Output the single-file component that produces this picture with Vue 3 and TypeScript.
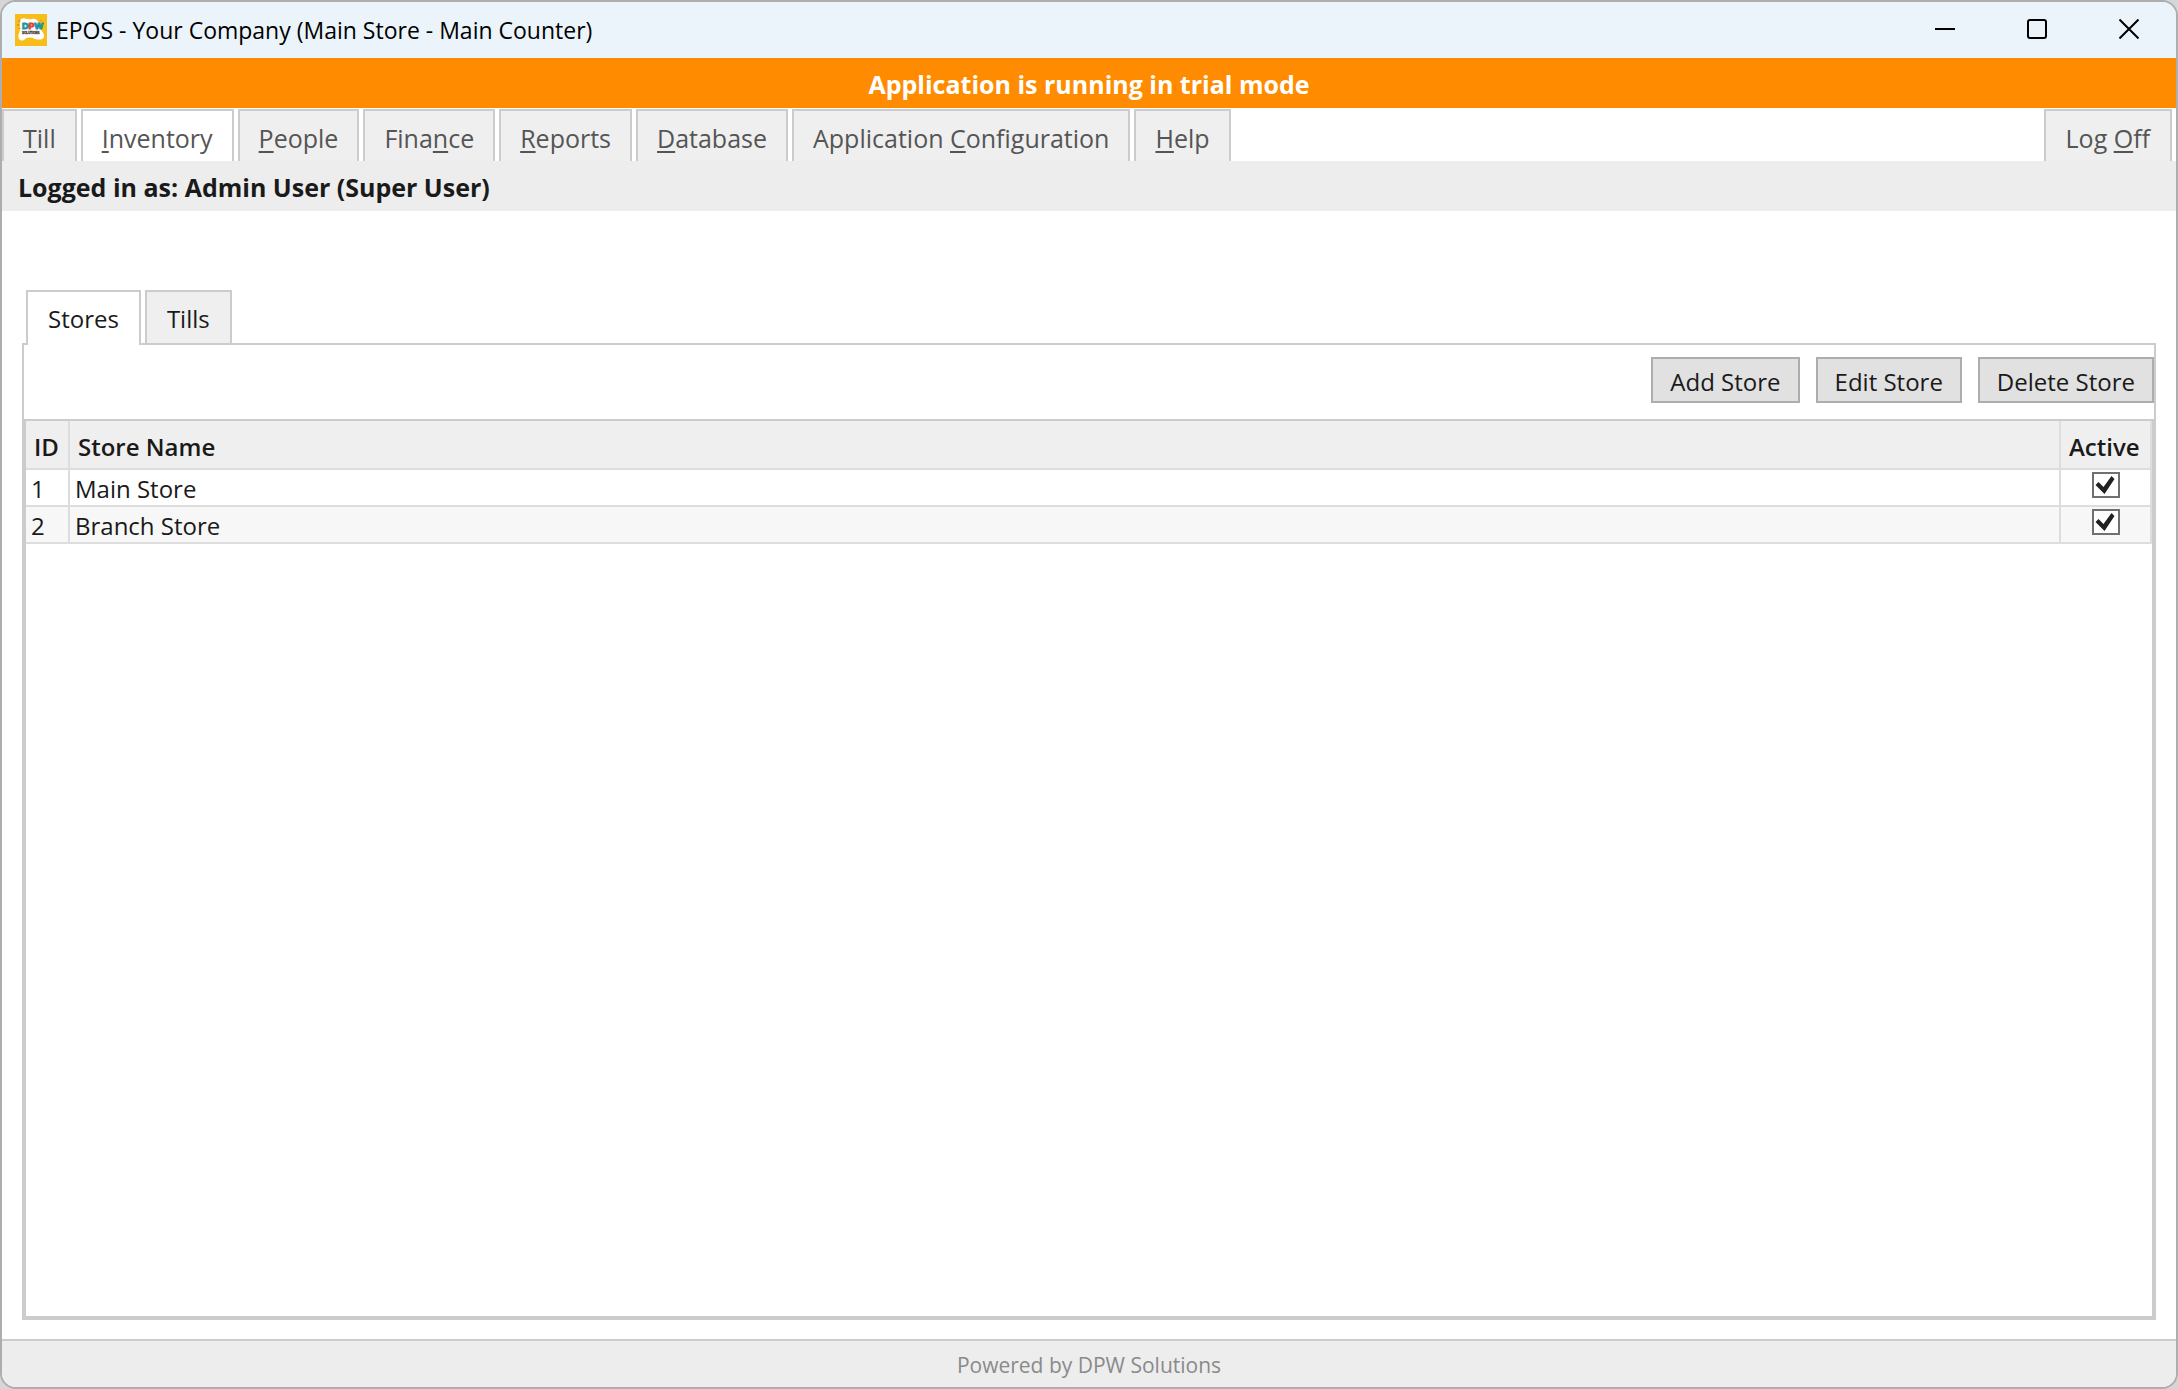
<script setup lang="ts">
import { reactive, ref } from 'vue'

interface MenuItem {
  before: string
  key: string
  after: string
}

interface Store {
  id: number
  name: string
  active: boolean
}

const menu: MenuItem[] = [
  { before: '', key: 'T', after: 'ill' },
  { before: '', key: 'I', after: 'nventory' },
  { before: '', key: 'P', after: 'eople' },
  { before: 'Fina', key: 'n', after: 'ce' },
  { before: '', key: 'R', after: 'eports' },
  { before: '', key: 'D', after: 'atabase' },
  { before: 'Application ', key: 'C', after: 'onfiguration' },
  { before: '', key: 'H', after: 'elp' },
]
const currentMenu = ref(1)

const tabs = ['Stores', 'Tills']
const currentTab = ref('Stores')

const actions = ['Add Store', 'Edit Store', 'Delete Store']

const stores = reactive<Store[]>([
  { id: 1, name: 'Main Store', active: true },
  { id: 2, name: 'Branch Store', active: true },
])
</script>

<template>
  <div class="window">
    <header class="titlebar">
      <svg class="logo" viewBox="0 0 32 32" aria-hidden="true">
        <rect width="32" height="32" fill="#f8bd1a" />
        <path d="M6 5C9 3 12 6 17 5C22 4 24 8 25 13C26 18 30 19 29 23C28 26 24 26 20 25C15 23 12 23 9 26C5 28 2 24 4 19C6 15 4 9 6 5Z" fill="#fff" />
        <path d="M4 6v2M3 10v2M5 14v1M26 6v1M28 9v1M27 12v1" stroke="#a58434" stroke-width="1" />
        <text x="7" y="15" class="logo-name"><tspan class="teal">D</tspan><tspan class="red">P</tspan><tspan class="teal">W</tspan></text>
        <text x="7" y="20" class="logo-sub">SOLUTIONS</text>
      </svg>
      <h1 class="title">EPOS - Your Company (Main Store - Main Counter)</h1>
      <div class="controls">
        <button type="button" aria-label="Minimize">
          <svg viewBox="0 0 20 20"><path d="M0 10H20" /></svg>
        </button>
        <button type="button" aria-label="Maximize">
          <svg viewBox="0 0 20 20"><rect x="1" y="1" width="18" height="18" rx="2" /></svg>
        </button>
        <button type="button" aria-label="Close">
          <svg viewBox="0 0 20 20"><path d="M0.5 0.5L19.5 19.5M19.5 0.5L0.5 19.5" /></svg>
        </button>
      </div>
    </header>

    <div class="trial">Application is running in trial mode</div>

    <nav class="menu">
      <button
        v-for="(item, i) in menu"
        :key="i"
        type="button"
        class="menu-item"
        :class="{ current: i === currentMenu }"
        @click="currentMenu = i"
      >{{ item.before }}<u>{{ item.key }}</u>{{ item.after }}</button>
      <button type="button" class="menu-item logoff">Log <u>O</u>ff</button>
    </nav>

    <div class="status">Logged in as: Admin User (Super User)</div>

    <main class="content">
      <div class="tabs" role="tablist">
        <button
          v-for="tab in tabs"
          :key="tab"
          type="button"
          role="tab"
          class="tab"
          :class="{ current: tab === currentTab }"
          :aria-selected="tab === currentTab"
          @click="currentTab = tab"
        >{{ tab }}</button>
      </div>
      <section class="panel">
        <div class="toolbar">
          <button v-for="action in actions" :key="action" type="button" class="action">{{ action }}</button>
        </div>
        <div class="grid">
          <table>
            <thead>
              <tr>
                <th class="col-id">ID</th>
                <th>Store Name</th>
                <th class="col-active">Active</th>
              </tr>
            </thead>
            <tbody>
              <tr v-for="store in stores" :key="store.id">
                <td>{{ store.id }}</td>
                <td>{{ store.name }}</td>
                <td class="check">
                  <input v-model="store.active" type="checkbox" :aria-label="`${store.name} active`" />
                </td>
              </tr>
            </tbody>
          </table>
        </div>
      </section>
    </main>

    <footer class="footer">Powered by DPW Solutions</footer>
  </div>
</template>

<style>
body {
  background: #d6d6d6;
}
</style>

<style scoped>
.window {
  box-sizing: border-box;
  min-height: 100vh;
  display: flex;
  flex-direction: column;
  border: 2px solid #adadad;
  border-radius: 16px;
  overflow: hidden;
  background: #fff;
  color: #1a1a1a;
  font-family: "Open Sans", "Noto Sans", sans-serif;
  font-size: 25px;
  line-height: 34px;
}

button {
  box-sizing: border-box;
  margin: 0;
  font: inherit;
  color: inherit;
  white-space: nowrap;
}

.titlebar {
  display: flex;
  align-items: center;
  height: 56px;
  padding: 0 1px 0 13px;
  box-sizing: border-box;
  background: #ebf4fa;
}

.logo {
  width: 32px;
  height: 32px;
  flex: none;
}

.logo-name {
  font: 700 9px "Liberation Sans Narrow", "Liberation Sans", sans-serif;
  stroke-width: 1;
}

.teal {
  fill: #1f95ab;
  stroke: #1f95ab;
}

.red {
  fill: #dc4936;
  stroke: #dc4936;
}

.logo-sub {
  font: 700 3px "Liberation Sans Narrow", "Liberation Sans", sans-serif;
  fill: #4a3b32;
  stroke: #4a3b32;
  stroke-width: 0.3;
}

.title {
  flex: 1;
  margin: 0 0 0 9px;
  color: #000;
  font-size: 23px;
  font-weight: 400;
}

.controls {
  display: flex;
  align-self: stretch;
}

.controls button {
  display: flex;
  align-items: center;
  justify-content: center;
  width: 92px;
  padding: 0 0 2px;
  border: 0;
  background: none;
}

.controls svg {
  width: 20px;
  height: 20px;
  fill: none;
  stroke: #000;
  stroke-width: 2;
}

.trial {
  height: 50px;
  line-height: 52px;
  background: #ff8c00;
  color: #fff;
  font-weight: 700;
  text-align: center;
}

.menu {
  display: flex;
  gap: 4px;
  height: 53px;
  padding: 1px 4px 0 0;
  box-sizing: border-box;
}

.menu-item {
  padding: 3px 19px 0;
  border: 2px solid #ccc;
  border-bottom: 0;
  background: #efefef;
  color: #555;
}

.menu-item.current {
  background: #fff;
}

.menu-item u {
  text-decoration-thickness: 2px;
  text-underline-offset: 3px;
}

.logoff {
  margin-left: auto;
  padding: 3px 20px 0;
}

.status {
  height: 50px;
  padding-left: 16px;
  background: #ededed;
  font-weight: 700;
  line-height: 52px;
}

.content {
  flex: 1;
  display: flex;
  flex-direction: column;
  padding: 79px 20px 19px;
  font-size: 24px;
}

.tabs {
  display: flex;
  align-items: flex-start;
  gap: 4px;
  padding-left: 4px;
}

.tab {
  height: 53px;
  padding: 2px 20px 0;
  border: 2px solid #ccc;
  border-bottom: 0;
  background: #efefef;
}

.tab.current {
  height: 55px;
  margin-bottom: -2px;
  padding-bottom: 2px;
  background: #fff;
  z-index: 1;
}

.panel {
  flex: 1;
  display: flex;
  flex-direction: column;
  border: 2px solid #ccc;
}

.toolbar {
  display: flex;
  justify-content: flex-end;
  gap: 16px;
  padding: 12px 0 16px;
}

.action {
  height: 46px;
  padding: 4px 17px 0;
  border: 2px solid #adadad;
  background: #e1e1e1;
}

.grid {
  flex: 1;
  border: 2px solid #ccc;
}

table {
  width: 100%;
  border-collapse: separate;
  border-spacing: 0;
  table-layout: fixed;
}

th,
td {
  box-sizing: border-box;
  border-right: 2px solid #ddd;
  border-bottom: 2px solid #ddd;
  text-align: left;
  white-space: nowrap;
}

th {
  height: 49px;
  padding: 5px 0 0 8px;
  background: #efefef;
  font-weight: 600;
}

td {
  height: 37px;
  padding: 3px 0 0 5px;
  line-height: 32px;
}

tbody tr:nth-child(even) td {
  background: #f7f7f7;
}

.col-id {
  width: 44px;
}

.col-active {
  width: 91px;
}

.check {
  padding: 2px 0 0;
  text-align: center;
  vertical-align: top;
}

.check input {
  appearance: none;
  display: block;
  box-sizing: border-box;
  width: 28px;
  height: 26px;
  margin: 0 auto;
  border: 2px solid #707070;
  background: #fff;
}

.check input:checked::before {
  content: "";
  display: block;
  height: 100%;
  background: #212121;
  clip-path: polygon(2px 11px, 5px 8px, 10px 13px, 18px 2px, 21px 5px, 11px 20px);
}

.footer {
  height: 46px;
  border-top: 2px solid #ccc;
  background: #ededed;
  color: #8a8a8a;
  font-size: 21px;
  line-height: 48px;
  text-align: center;
}
</style>
